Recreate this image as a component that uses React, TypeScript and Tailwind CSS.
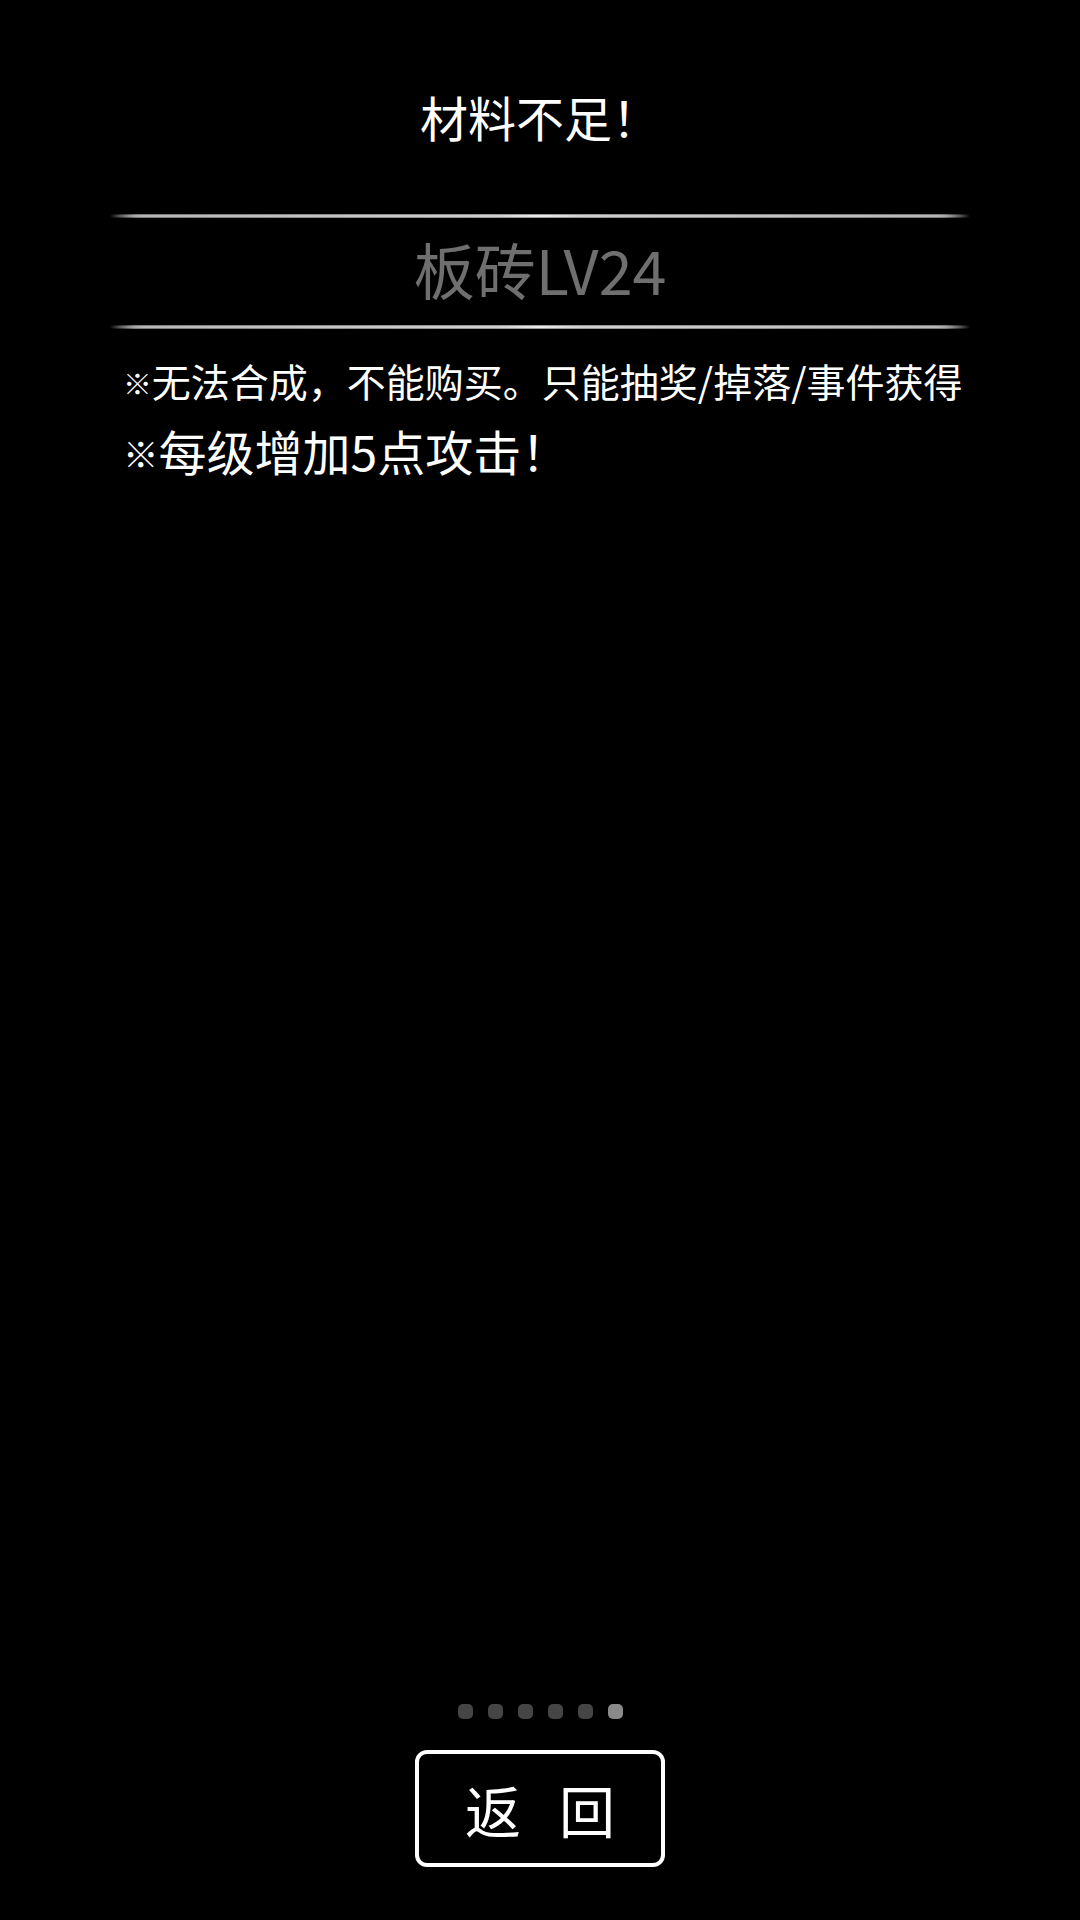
import React from 'react';

const Rule: React.FC = () => (
  <div className="mx-[110px] h-[4px] flex items-center bg-[linear-gradient(90deg,transparent_0%,#7a7a7a_3%,#9a9a9a_50%,#7a7a7a_97%,transparent_100%)]">
    <div className="w-full h-[2px] bg-[linear-gradient(90deg,transparent_0%,#b8b8b8_4%,#d0d0d0_45%,#ececec_50%,#d0d0d0_55%,#b8b8b8_96%,transparent_100%)]" />
  </div>
);

const Mark: React.FC = () => <span className="text-[0.74em] align-[0.08em]">※</span>;

export default function App() {
  const pages = 6;
  const current = 5;

  return (
    <div className="w-[1080px] h-[1920px] bg-black text-white flex flex-col font-['Noto_Sans_CJK_SC',sans-serif]">
      <div className="pt-[86px] text-center text-[48px] leading-[60px]">材料不足！</div>

      <div className="mt-[68px]">
        <Rule />
        <div className="h-[107px] flex items-center justify-center pb-[6px] text-[61px] text-[#6f6f6f]">
          板砖LV24
        </div>
        <Rule />
      </div>

      <div className="pl-[123px]">
        <div className="mt-[26px] text-[39px] leading-[50px] whitespace-nowrap">
          <Mark />无法合成，不能购买。只能抽奖/掉落/事件获得
        </div>
        <div className="mt-[12px] text-[48px] leading-[60px] whitespace-nowrap">
          <Mark />每级增加5点攻击！
        </div>
      </div>

      <div className="flex-1" />

      <div className="flex justify-center gap-[15px]">
        {Array.from({ length: pages }).map((_, i) => (
          <div
            key={i}
            className={`w-[15px] h-[15px] rounded-[5px] ${i === current ? 'bg-[#8a8a8a]' : 'bg-[#454545]'}`}
          />
        ))}
      </div>

      <div className="mt-[31px] mb-[53px] flex justify-center">
        <button className="w-[250px] h-[117px] border-[4px] border-white rounded-[12px] flex items-center justify-center gap-[38px] text-[56px] text-white">
          <span>返</span>
          <span>回</span>
        </button>
      </div>
    </div>
  );
}
